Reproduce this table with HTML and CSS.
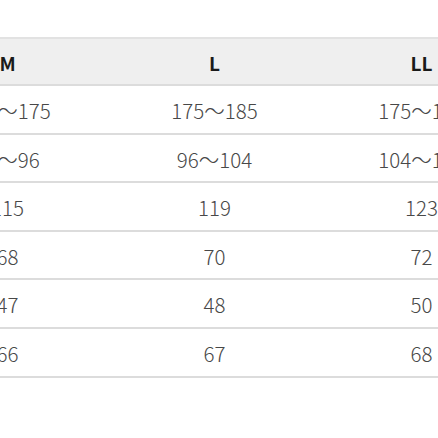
FILE: index.html
```html
<!DOCTYPE html>
<html lang="ja">
<head>
<meta charset="utf-8">
<link rel="stylesheet" href="styles.css">
</head>
<body>
<div class="viewport">
  <div class="size-table">
    <div class="row head">
      <div class="cell">M</div>
      <div class="cell">L</div>
      <div class="cell">LL</div>
    </div>
    <div class="row">
      <div class="cell">165〜175</div>
      <div class="cell">175〜185</div>
      <div class="cell">175〜185</div>
    </div>
    <div class="row">
      <div class="cell">88〜96</div>
      <div class="cell">96〜104</div>
      <div class="cell">104〜112</div>
    </div>
    <div class="row">
      <div class="cell">115</div>
      <div class="cell">119</div>
      <div class="cell">123</div>
    </div>
    <div class="row">
      <div class="cell">68</div>
      <div class="cell">70</div>
      <div class="cell">72</div>
    </div>
    <div class="row">
      <div class="cell">47</div>
      <div class="cell">48</div>
      <div class="cell">50</div>
    </div>
    <div class="row">
      <div class="cell">66</div>
      <div class="cell">67</div>
      <div class="cell">68</div>
    </div>
  </div>
</div>
</body>
</html>
```

FILE: styles.css
```css
html, body {
  margin: 0;
  padding: 0;
  background: #fff;
}
.viewport {
  width: 438px;
  height: 438px;
  overflow: hidden;
}
.size-table {
  margin-top: 37px;
  margin-left: -96px;
  width: 621px;
  font-family: "Noto Sans CJK JP", "Noto Sans", sans-serif;
  font-weight: 300;
  font-size: 20.5px;
  color: #484848;
}
.row {
  display: grid;
  grid-template-columns: repeat(3, 207px);
  align-items: center;
  height: 46.6px;
  border-bottom: 2px solid #dcdcdc;
}
.cell {
  text-align: center;
  line-height: 1;
  padding-top: 2px;
}
.head {
  background: #efefef;
  border-top: 2px solid #e2e2e2;
  font-weight: 700;
  font-size: 19px;
  color: #1a1a1a;
  height: 45px;
}
```
